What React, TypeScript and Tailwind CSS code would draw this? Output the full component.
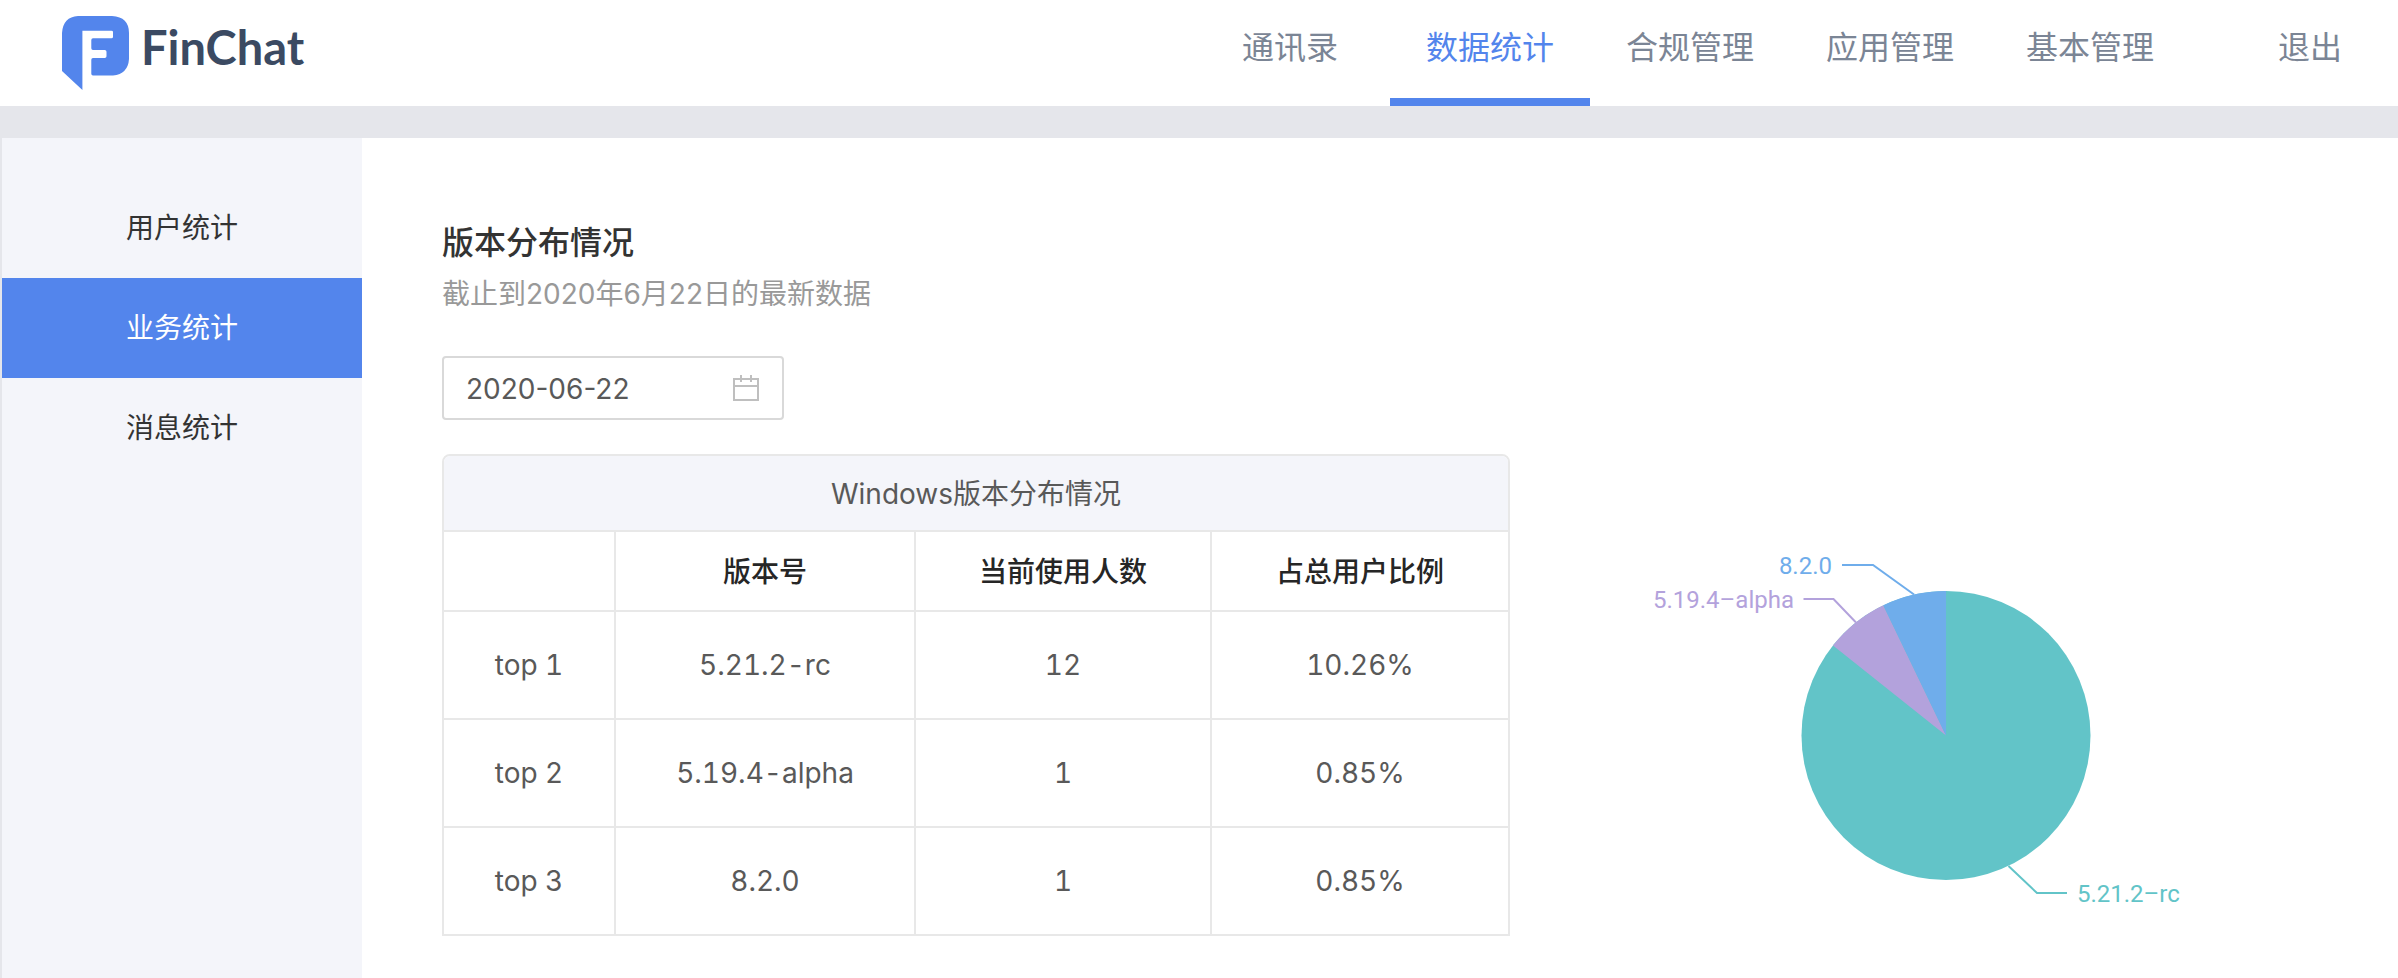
const navItems = ['通讯录', '数据统计', '合规管理', '应用管理', '基本管理'];
const sideItems = ['用户统计', '业务统计', '消息统计'];
const columns = ['', '版本号', '当前使用人数', '占总用户比例'];
const rows = [
  ['top 1', '5.21.2-rc', '12', '10.26%'],
  ['top 2', '5.19.4-alpha', '1', '0.85%'],
  ['top 3', '8.2.0', '1', '0.85%'],
];

function Logo() {
  return (
    <a href="#home" aria-label="FinChat" className="flex items-start gap-3 pt-4 pl-[62px]">
      <svg width="67" height="74" viewBox="0 0 67 74" aria-hidden="true">
        <path
          fill="#5385ec"
          d="M16 0H50Q67 1 67 17V43Q66 58 51 59.5H31Q29.3 59.5 29.3 57.8V43.8Q29.3 42 31 42H42.7Q44.5 42 44.5 40.2V35.8Q44.5 34 42.7 34H31Q29.3 34 29.3 32.2V24Q29.3 22.3 31 22.3H49.5Q51 22.3 51 20.8V16Q51 14.7 49.5 14.7H20.4V74L0 55V17Q1 1 16 0Z"
        />
      </svg>
      <span className="font-[Lato,sans-serif] text-[47px] leading-[62px] font-bold text-[#3b4a62]">FinChat</span>
    </a>
  );
}

function Header() {
  return (
    <header className="flex h-[106px] items-stretch justify-between bg-white">
      <Logo />
      <nav className="flex text-[32px] leading-[48px]">
        {navItems.map((item, i) => (
          <a
            key={item}
            href="#nav"
            className={
              i === 1
                ? 'w-[200px] border-b-8 border-[#5385ec] pt-6 text-center text-[#5385ec]'
                : 'w-[200px] border-b-8 border-transparent pt-6 text-center text-[#7b8595]'
            }
          >
            {item}
          </a>
        ))}
        <a href="#logout" className="pt-6 pr-14 pl-[88px] text-[#7b8595]">
          退出
        </a>
      </nav>
    </header>
  );
}

function Sidebar() {
  return (
    <aside className="w-[362px] shrink-0 border-l-2 border-[#e5e6eb] bg-[#f4f5fa] pt-10">
      {sideItems.map((item, i) => (
        <a
          key={item}
          href="#side"
          className={
            i === 1
              ? 'block h-[100px] bg-[#5385ec] text-center text-[28px] leading-[100px] text-white'
              : 'block h-[100px] text-center text-[28px] leading-[100px] text-[#333333]'
          }
        >
          {item}
        </a>
      ))}
    </aside>
  );
}

function DateField() {
  return (
    <div className="mt-11 flex h-16 w-[342px] items-center rounded border-2 border-[#d9d9d9] bg-white pr-[23px] pl-[22px]">
      <input
        type="text"
        aria-label="日期"
        defaultValue="2020-06-22"
        className="min-w-0 flex-1 bg-transparent pt-0.5 text-[28px] leading-10 text-[#595959] outline-none"
      />
      <svg width="26" height="26" viewBox="0 0 26 26" fill="none" stroke="#bfbfbf" strokeWidth="2" aria-hidden="true">
        <path d="M1 4H25V25H1ZM1 11H25M8 0V7M18 0V7" />
      </svg>
    </div>
  );
}

function VersionTable() {
  return (
    <div className="overflow-hidden rounded-t-lg border-2 border-[#e8e8e8]">
      <table className="w-full table-fixed border-separate border-spacing-0 text-center text-[28px] leading-10 text-[#595959] tabular-nums">
        <caption className="h-[76px] border-b-2 border-[#e8e8e8] bg-[#f4f5fa] pt-[18px] text-[28px] leading-10">
          Windows版本分布情况
        </caption>
        <colgroup>
          <col className="w-[172px]" />
          <col className="w-[300px]" />
          <col className="w-[296px]" />
          <col />
        </colgroup>
        <thead>
          <tr>
            {columns.map((c, i) => (
              <th
                key={i}
                scope="col"
                className="h-20 border-r-2 border-b-2 border-[#e8e8e8] pt-0.5 font-medium text-[#262626] last:border-r-0"
              >
                {c}
              </th>
            ))}
          </tr>
        </thead>
        <tbody className="[&>tr:last-child>td]:h-[106px] [&>tr:last-child>td]:border-b-0">
          {rows.map((r) => (
            <tr key={r[0]}>
              {r.map((v, i) => (
                <td key={i} className="h-[108px] border-r-2 border-b-2 border-[#e8e8e8] last:border-r-0">
                  {v}
                </td>
              ))}
            </tr>
          ))}
        </tbody>
      </table>
    </div>
  );
}

function PieChart() {
  return (
    <svg
      width="600"
      height="402"
      viewBox="0 0 600 402"
      role="img"
      aria-label="Windows版本分布情况"
      className="font-[Roboto,sans-serif] text-[24px]"
    >
      <circle cx="300" cy="201.5" r="144.5" fill="#62c4c8" />
      <path fill="#b3a2dc" d="M300 201.5L187 111.4A144.5 144.5 0 0 1 237.3 71.3Z" />
      <path fill="#6fadeb" d="M300 201.5L237.3 71.3A144.5 144.5 0 0 1 300 57Z" />
      <g fill="none" strokeWidth="2">
        <path stroke="#6fadeb" d="M268 60.5L227 31H196" />
        <path stroke="#b3a2dc" d="M210 88.5L187.5 65H157.5" />
        <path stroke="#62c4c8" d="M362.5 332L391 359H421" />
      </g>
      <text x="186" y="40" textAnchor="end" fill="#6fadeb">8.2.0</text>
      <text x="148" y="74" textAnchor="end" fill="#b3a2dc">5.19.4–alpha</text>
      <text x="431" y="368" fill="#62c4c8">5.21.2–rc</text>
    </svg>
  );
}

export default function App() {
  return (
    <div className="flex min-h-screen flex-col bg-white font-[Inter,'Noto_Sans_CJK_SC',sans-serif]">
      <Header />
      <div className="h-8 bg-[#e5e6eb]" />
      <div className="flex flex-1">
        <Sidebar />
        <main className="min-w-0 flex-1 pt-20 pr-4 pl-20">
          <h1 className="text-[32px] leading-[50px] font-medium text-[#333333]">版本分布情况</h1>
          <p className="mt-2 text-[28px] leading-9 text-[#999999]">截止到2020年6月22日的最新数据</p>
          <DateField />
          <div className="mt-[34px] grid grid-cols-[267fr_218fr]">
            <VersionTable />
            <div className="flex justify-center pt-20">
              <PieChart />
            </div>
          </div>
        </main>
      </div>
    </div>
  );
}
